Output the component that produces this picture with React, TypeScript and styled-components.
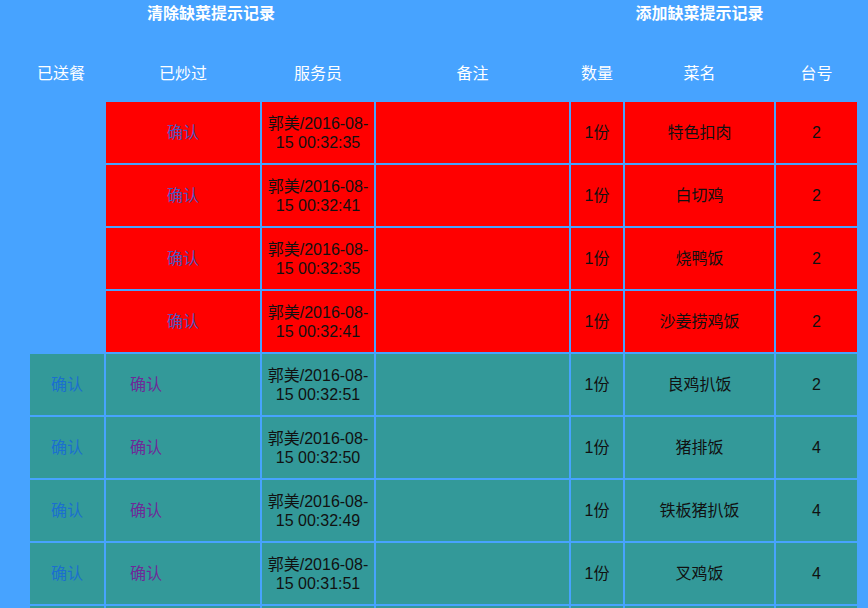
import React from "react";
import styled, { createGlobalStyle } from "styled-components";

const Global = createGlobalStyle`
  html, body { margin: 0; padding: 0; background: #47a3ff; }
  body { font-family: "Liberation Sans", "Noto Sans CJK SC", sans-serif; }
`;

const COLS = "74px 154px 112px 193px 52px 149px 81px";

const Page = styled.div`
  width: 868px;
  min-height: 608px;
  background: #47a3ff;
  overflow: hidden;
`;

const TitleBar = styled.div`
  display: grid;
  grid-template-columns: 422px 203px 149px;
  height: 28px;
  align-items: center;
`;

const Title = styled.div<{ $col: number }>`
  grid-column: ${(p) => p.$col};
  text-align: center;
  color: #ffffff;
  font-weight: bold;
  font-size: 16px;
  line-height: 28px;
  white-space: nowrap;
`;

const Table = styled.div`
  display: flex;
  flex-direction: column;
  gap: 2px;
  padding-left: 30px;
  margin-top: 16px;
`;

const Row = styled.div<{ $height: number }>`
  display: grid;
  grid-template-columns: ${COLS};
  column-gap: 2px;
  height: ${(p) => p.$height}px;
  flex: none;
`;

const HeadCell = styled.div<{ $shift?: number }>`
  display: flex;
  align-items: center;
  justify-content: center;
  color: #ffffff;
  font-size: 16px;
  padding-right: ${(p) => p.$shift ?? 0}px;
`;

const Cell = styled.div<{ $tone: "red" | "teal" | "none"; $align?: "left" | "center" }>`
  display: flex;
  align-items: center;
  justify-content: ${(p) => (p.$align === "left" ? "flex-start" : "center")};
  padding-left: ${(p) => (p.$align === "left" ? "24px" : "0")};
  text-align: center;
  font-size: 16px;
  line-height: 19px;
  color: #111;
  background: ${(p) =>
    p.$tone === "red" ? "#ff0000" : p.$tone === "teal" ? "#339999" : "transparent"};
`;

const Link = styled.span<{ $kind: "muted" | "blue" | "visited" }>`
  color: ${(p) =>
    p.$kind === "muted" ? "#4d55bc" : p.$kind === "blue" ? "#1b6fcf" : "#6e2a98"};
  cursor: pointer;
`;

type Item = { time: string; dish: string; table: string };

const redRows: Item[] = [
  { time: "00:32:35", dish: "特色扣肉", table: "2" },
  { time: "00:32:41", dish: "白切鸡", table: "2" },
  { time: "00:32:35", dish: "烧鸭饭", table: "2" },
  { time: "00:32:41", dish: "沙姜捞鸡饭", table: "2" },
];

const tealRows: Item[] = [
  { time: "00:32:51", dish: "良鸡扒饭", table: "2" },
  { time: "00:32:50", dish: "猪排饭", table: "4" },
  { time: "00:32:49", dish: "铁板猪扒饭", table: "4" },
  { time: "00:31:51", dish: "叉鸡饭", table: "4" },
];

export default function App() {
  return (
    <Page>
      <Global />
      <TitleBar>
        <Title $col={1}>清除缺菜提示记录</Title>
        <Title $col={3}>添加缺菜提示记录</Title>
      </TitleBar>
      <Table>
        <Row $height={56}>
          <HeadCell $shift={12}>已送餐</HeadCell>
          <HeadCell>已炒过</HeadCell>
          <HeadCell>服务员</HeadCell>
          <HeadCell>备注</HeadCell>
          <HeadCell>数量</HeadCell>
          <HeadCell>菜名</HeadCell>
          <HeadCell>台号</HeadCell>
        </Row>
        {redRows.map((r, i) => (
          <Row $height={61} key={"r" + i}>
            <Cell $tone="none" />
            <Cell $tone="red">
              <Link $kind="muted">确认</Link>
            </Cell>
            <Cell $tone="red">郭美/2016-08-15 {r.time}</Cell>
            <Cell $tone="red" />
            <Cell $tone="red">1份</Cell>
            <Cell $tone="red">{r.dish}</Cell>
            <Cell $tone="red">{r.table}</Cell>
          </Row>
        ))}
        {tealRows.map((r, i) => (
          <Row $height={61} key={"t" + i}>
            <Cell $tone="teal">
              <Link $kind="blue">确认</Link>
            </Cell>
            <Cell $tone="teal" $align="left">
              <Link $kind="visited">确认</Link>
            </Cell>
            <Cell $tone="teal">郭美/2016-08-15 {r.time}</Cell>
            <Cell $tone="teal" />
            <Cell $tone="teal">1份</Cell>
            <Cell $tone="teal">{r.dish}</Cell>
            <Cell $tone="teal">{r.table}</Cell>
          </Row>
        ))}
        <Row $height={61}>
          <Cell $tone="teal" />
          <Cell $tone="teal" />
          <Cell $tone="teal" />
          <Cell $tone="teal" />
          <Cell $tone="teal" />
          <Cell $tone="teal" />
          <Cell $tone="teal" />
        </Row>
      </Table>
    </Page>
  );
}
